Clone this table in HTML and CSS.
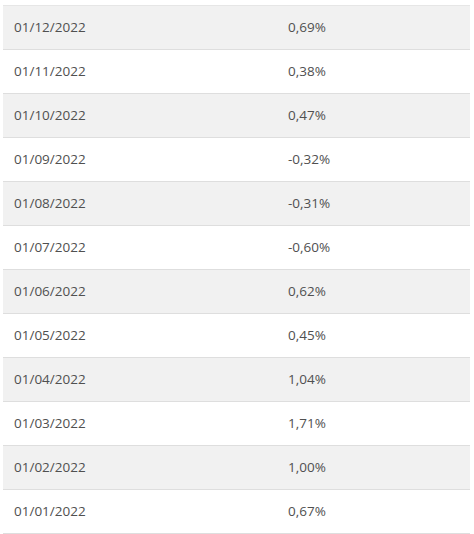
FILE: index.html
```html
<!DOCTYPE html>
<html>
<head>
<meta charset="utf-8">
<link rel="stylesheet" href="styles.css">
</head>
<body>
<div class="table">
  <div class="row alt"><div class="cell date">01/12/2022</div><div class="cell val">0,69%</div></div>
  <div class="row"><div class="cell date">01/11/2022</div><div class="cell val">0,38%</div></div>
  <div class="row alt"><div class="cell date">01/10/2022</div><div class="cell val">0,47%</div></div>
  <div class="row"><div class="cell date">01/09/2022</div><div class="cell val">-0,32%</div></div>
  <div class="row alt"><div class="cell date">01/08/2022</div><div class="cell val">-0,31%</div></div>
  <div class="row"><div class="cell date">01/07/2022</div><div class="cell val">-0,60%</div></div>
  <div class="row alt"><div class="cell date">01/06/2022</div><div class="cell val">0,62%</div></div>
  <div class="row"><div class="cell date">01/05/2022</div><div class="cell val">0,45%</div></div>
  <div class="row alt"><div class="cell date">01/04/2022</div><div class="cell val">1,04%</div></div>
  <div class="row"><div class="cell date">01/03/2022</div><div class="cell val">1,71%</div></div>
  <div class="row alt"><div class="cell date">01/02/2022</div><div class="cell val">1,00%</div></div>
  <div class="row"><div class="cell date">01/01/2022</div><div class="cell val">0,67%</div></div>
</div>
</body>
</html>
```
FILE: styles.css
```css
html, body {
  margin: 0;
  padding: 0;
  background: #fff;
}
body {
  padding: 5px 4px 0 3px;
  font-family: "Open Sans", "Liberation Sans", sans-serif;
  font-size: 13.5px;
  color: #505050;
}
.table {
  display: flex;
  flex-direction: column;
  border-top: 1px solid #e6e6e6;
}
.row {
  display: grid;
  grid-template-columns: 274px 1fr;
  height: 43px;
  border-bottom: 1px solid #dedede;
  align-items: center;
}
.row.alt {
  background: #f1f1f1;
}
.cell {
  padding: 0 11px 2px;
}
```
